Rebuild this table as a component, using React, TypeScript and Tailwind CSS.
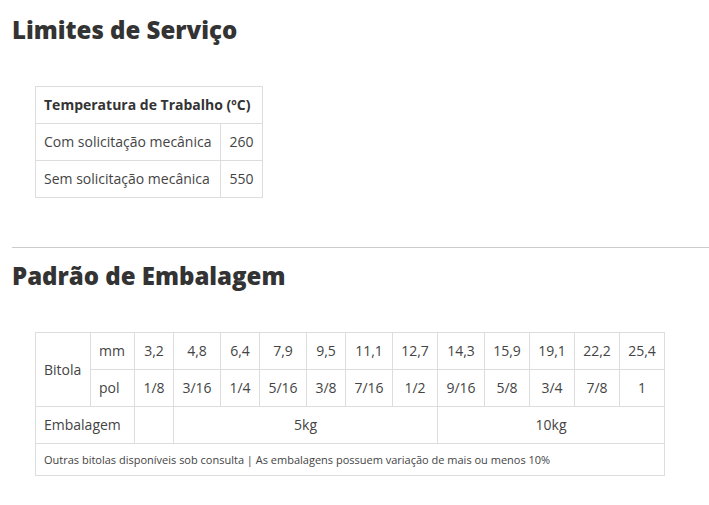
const mm = ['3,2', '4,8', '6,4', '7,9', '9,5', '11,1', '12,7', '14,3', '15,9', '19,1', '22,2', '25,4']
const pol = ['1/8', '3/16', '1/4', '5/16', '3/8', '7/16', '1/2', '9/16', '5/8', '3/4', '7/8', '1']
const widths = ['w-[55px]', 'w-[44px]', 'w-[39px]', 'w-[47px]', 'w-[39px]', 'w-[47px]', 'w-[39px]', 'w-[47px]', 'w-[45px]', 'w-[47px]', 'w-[45px]', 'w-[45px]', 'w-[45px]', 'w-[45px]']

const cell = 'border border-[#dddddd] h-[37px] px-2 py-0 align-middle'

export default function App() {
  return (
    <div className="min-h-[505px] bg-white font-['Open_Sans',sans-serif] text-[#444]">
      <div className="px-3 pt-[15px]">
        <h2 className="text-[24px] leading-[30px] font-extrabold text-[#333]">Limites de Serviço</h2>

        <table className="mt-[41px] ml-[23px] border-collapse text-[14px] leading-5">
          <tbody>
            <tr>
              <th colSpan={2} className={`${cell} text-left font-bold text-[#333]`}>
                Temperatura de Trabalho (ºC)
              </th>
            </tr>
            <tr>
              <td className={`${cell} w-[185px]`}>Com solicitação mecânica</td>
              <td className={`${cell} w-[42px] text-center`}>260</td>
            </tr>
            <tr>
              <td className={cell}>Sem solicitação mecânica</td>
              <td className={`${cell} text-center`}>550</td>
            </tr>
          </tbody>
        </table>
      </div>

      <hr className="mt-[49px] ml-3 border-0 border-t border-[#cccccc]" />

      <div className="px-3 pt-[13px]">
        <h2 className="text-[24px] leading-[30px] font-extrabold text-[#333]">Padrão de Embalagem</h2>

        <table className="mt-[41px] ml-[23px] w-[629px] table-fixed border-collapse text-[14px] leading-5">
          <colgroup>
            {widths.map((w, i) => (
              <col key={i} className={w} />
            ))}
          </colgroup>
          <tbody>
            <tr>
              <td rowSpan={2} className={cell}>Bitola</td>
              <td className={cell}>mm</td>
              {mm.map((v) => (
                <td key={v} className={`${cell} px-0 text-center`}>{v}</td>
              ))}
            </tr>
            <tr>
              <td className={cell}>pol</td>
              {pol.map((v) => (
                <td key={v} className={`${cell} px-0 text-center`}>{v}</td>
              ))}
            </tr>
            <tr>
              <td colSpan={2} className={cell}>Embalagem</td>
              <td className={cell}></td>
              <td colSpan={6} className={`${cell} text-center`}>5kg</td>
              <td colSpan={5} className={`${cell} text-center`}>10kg</td>
            </tr>
            <tr>
              <td colSpan={14} className="border border-[#dddddd] h-[32px] px-2 text-[11px] leading-4">
                Outras bitolas disponíveis sob consulta | As embalagens possuem variação de mais ou menos 10%
              </td>
            </tr>
          </tbody>
        </table>
      </div>
    </div>
  )
}
